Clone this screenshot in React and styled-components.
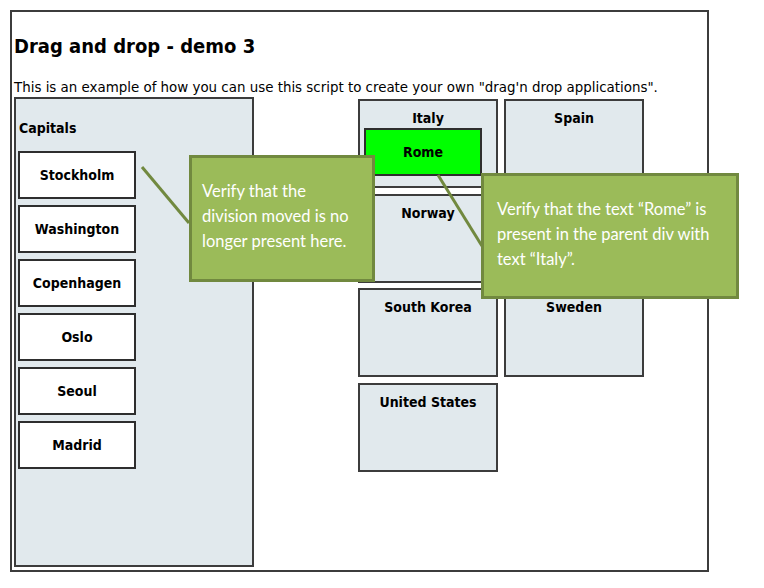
import React from "react";
import styled, { createGlobalStyle } from "styled-components";

const capitals = ["Stockholm", "Washington", "Copenhagen", "Oslo", "Seoul", "Madrid"];

const GlobalStyle = createGlobalStyle`
  body {
    margin: 0;
    background: #ffffff;
    font-family: "DejaVu Sans Condensed", "DejaVu Sans", sans-serif;
    color: #000;
  }
`;

const App = () => {
  return (
    <>
      <GlobalStyle />
      <Frame>
        <Title>Drag and drop - demo 3</Title>
        <Intro>
          This is an example of how you can use this script to create your own "drag'n drop applications".
        </Intro>
        <Row>
          <CapitalsPanel>
            <PanelTitle>Capitals</PanelTitle>
            <CapitalList>
              {capitals.map((c) => (
                <Capital key={c}>{c}</Capital>
              ))}
            </CapitalList>
          </CapitalsPanel>
          <Countries>
            <Country>
              <CountryName>Italy</CountryName>
              <Capital $moved>Rome</Capital>
            </Country>
            <Country>
              <CountryName>Spain</CountryName>
            </Country>
            <Country>
              <CountryName>Norway</CountryName>
            </Country>
            <Country />
            <Country>
              <CountryName>South Korea</CountryName>
            </Country>
            <Country>
              <CountryName>Sweden</CountryName>
            </Country>
            <Country>
              <CountryName>United States</CountryName>
            </Country>
          </Countries>
        </Row>

        <Connectors width="740" height="300">
          <line x1="130" y1="155" x2="177" y2="211" />
          <line x1="426" y1="163" x2="470" y2="234" />
        </Connectors>

        <Callout $left={177} $top={143} $width={186} $height={127} $pad={10}>
          Verify that the
          <br />
          division moved is no
          <br />
          longer present here.
        </Callout>
        <Callout $left={469} $top={161} $width={258} $height={126} $pad={13}>
          Verify that the text “Rome” is
          <br />
          present in the parent div with
          <br />
          text “Italy”.
        </Callout>
      </Frame>
    </>
  );
};

export default App;

//PAGE FRAME
const Frame = styled.div`
  position: relative;
  box-sizing: border-box;
  margin: 10px 0 0 10px;
  width: 699px;
  height: 562px;
  border: 2px solid #3c3c3c;
  padding: 0 0 0 2px;
`;

const Title = styled.h1`
  margin: 21px 0 0 0;
  font-size: 20px;
  line-height: 26px;
  font-weight: bold;
`;

const Intro = styled.p`
  margin: 19px 0 0 0;
  font-size: 14.9px;
  line-height: 19px;
  white-space: nowrap;
`;

const Row = styled.div`
  display: flex;
  align-items: flex-start;
`;

const CapitalsPanel = styled.div`
  box-sizing: border-box;
  width: 240px;
  height: 470px;
  background: #e1e9ed;
  border: 2px solid #3c3c3c;
  padding: 0 0 0 2px;
`;

const PanelTitle = styled.div`
  font-size: 14px;
  font-weight: bold;
  padding: 20px 0 0 1px;
  line-height: 18px;
`;

const CapitalList = styled.div`
  display: flex;
  flex-direction: column;
  gap: 6px;
  margin-top: 14px;
`;

const Capital = styled.div`
  box-sizing: border-box;
  width: 118px;
  height: 48px;
  display: flex;
  align-items: center;
  justify-content: center;
  background: ${(p) => (p.$moved ? "#00ff00" : "#ffffff")};
  border: 2px solid #2e2e2e;
  font-size: 14px;
  font-weight: bold;
  margin: ${(p) => (p.$moved ? "1px 0 0 4px" : "0")};
`;

const Countries = styled.div`
  display: grid;
  grid-template-columns: repeat(2, 140px);
  grid-auto-rows: 89px;
  column-gap: 6px;
  row-gap: 5.5px;
  margin: 2px 0 0 104px;
`;

const Country = styled.div`
  box-sizing: border-box;
  background: #e1e9ed;
  border: 2px solid #3c3c3c;
`;

const CountryName = styled.div`
  font-size: 14px;
  font-weight: bold;
  text-align: center;
  padding-top: 8px;
  line-height: 18px;
`;

const Connectors = styled.svg`
  position: absolute;
  left: 0;
  top: 0;
  pointer-events: none;
  overflow: visible;

  line {
    stroke: #71893f;
    stroke-width: 3;
  }
`;

const Callout = styled.div`
  position: absolute;
  box-sizing: border-box;
  left: ${(p) => p.$left}px;
  top: ${(p) => p.$top}px;
  width: ${(p) => p.$width}px;
  height: ${(p) => p.$height}px;
  background: #9bbb59;
  border: 3px solid #71893f;
  padding: 21px 0 0 ${(p) => p.$pad}px;
  color: #ffffff;
  font-family: Lato, "Open Sans", sans-serif;
  font-size: 16.5px;
  line-height: 25px;
  white-space: nowrap;
`;
